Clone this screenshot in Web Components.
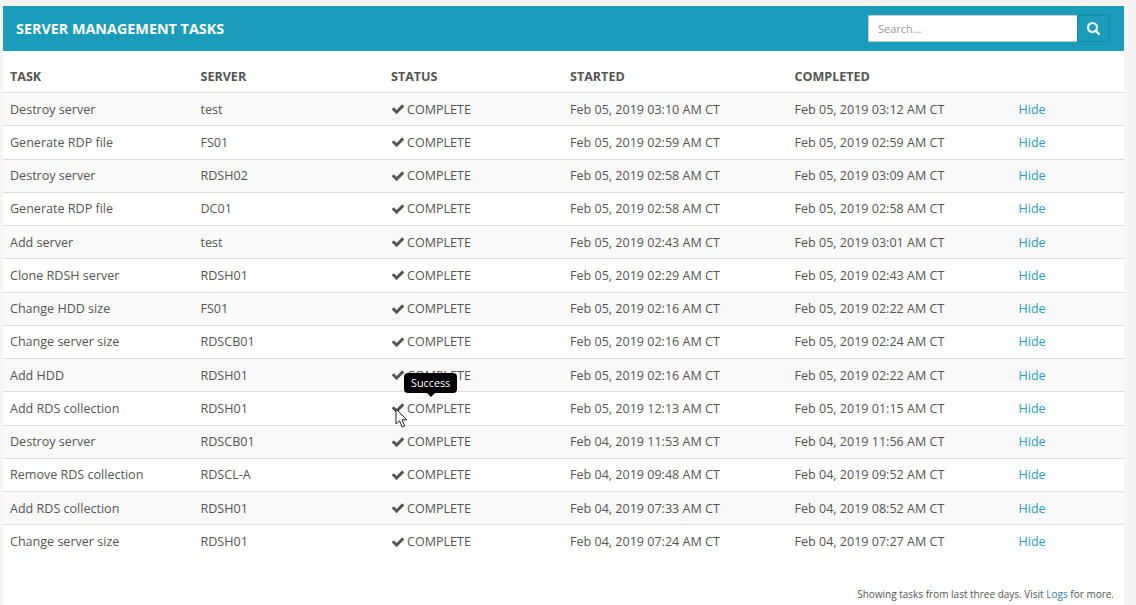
<!DOCTYPE html>
<html>
<head>
<meta charset="utf-8">
<title>Server Management Tasks</title>
<style>
  html, body { margin: 0; height: 605px; overflow: hidden; background: #f5f5f5; }
  body { font-family: "Open Sans", sans-serif; color: #555; }
</style>
</head>
<body>
<task-panel heading="SERVER MANAGEMENT TASKS">
  <task-row task="Destroy server" server="test" started="Feb 05, 2019 03:10 AM CT" completed="Feb 05, 2019 03:12 AM CT"></task-row>
  <task-row task="Generate RDP file" server="FS01" started="Feb 05, 2019 02:59 AM CT" completed="Feb 05, 2019 02:59 AM CT"></task-row>
  <task-row task="Destroy server" server="RDSH02" started="Feb 05, 2019 02:58 AM CT" completed="Feb 05, 2019 03:09 AM CT"></task-row>
  <task-row task="Generate RDP file" server="DC01" started="Feb 05, 2019 02:58 AM CT" completed="Feb 05, 2019 02:58 AM CT"></task-row>
  <task-row task="Add server" server="test" started="Feb 05, 2019 02:43 AM CT" completed="Feb 05, 2019 03:01 AM CT"></task-row>
  <task-row task="Clone RDSH server" server="RDSH01" started="Feb 05, 2019 02:29 AM CT" completed="Feb 05, 2019 02:43 AM CT"></task-row>
  <task-row task="Change HDD size" server="FS01" started="Feb 05, 2019 02:16 AM CT" completed="Feb 05, 2019 02:22 AM CT"></task-row>
  <task-row task="Change server size" server="RDSCB01" started="Feb 05, 2019 02:16 AM CT" completed="Feb 05, 2019 02:24 AM CT"></task-row>
  <task-row task="Add HDD" server="RDSH01" started="Feb 05, 2019 02:16 AM CT" completed="Feb 05, 2019 02:22 AM CT"></task-row>
  <task-row task="Add RDS collection" server="RDSH01" started="Feb 05, 2019 12:13 AM CT" completed="Feb 05, 2019 01:15 AM CT" hovered></task-row>
  <task-row task="Destroy server" server="RDSCB01" started="Feb 04, 2019 11:53 AM CT" completed="Feb 04, 2019 11:56 AM CT"></task-row>
  <task-row task="Remove RDS collection" server="RDSCL-A" started="Feb 04, 2019 09:48 AM CT" completed="Feb 04, 2019 09:52 AM CT"></task-row>
  <task-row task="Add RDS collection" server="RDSH01" started="Feb 04, 2019 07:33 AM CT" completed="Feb 04, 2019 08:52 AM CT"></task-row>
  <task-row task="Change server size" server="RDSH01" started="Feb 04, 2019 07:24 AM CT" completed="Feb 04, 2019 07:27 AM CT"></task-row>
  <span slot="footer">Showing tasks from last three days. Visit <a href="#" style="color:#2a7f9e;text-decoration:none">Logs</a> for more.</span>
</task-panel>

<script>
const COLUMNS = '190.5px 190.5px 179px 224.5px 224px 1fr';

class SearchBox extends HTMLElement {
  constructor() {
    super();
    this.attachShadow({ mode: 'open' });
    this.shadowRoot.innerHTML = `
      <style>
        :host { display: flex; width: 242px; height: 27px; }
        .field {
          flex: 1;
          box-sizing: border-box;
          background: #fff;
          border: 1px solid #ccc;
          border-right: none;
          border-radius: 2px 0 0 2px;
          padding: 0 9px;
          font-size: 11px;
          line-height: 25px;
          color: #999;
        }
        button {
          width: 33px;
          padding: 0;
          background: #1b9cba;
          border: 1px solid #188ba6;
          border-radius: 0 2px 2px 0;
          display: flex;
          align-items: center;
          justify-content: center;
        }
      </style>
      <div class="field">Search...</div>
      <button aria-label="Search">
        <svg width="13" height="13" viewBox="64 128 1664 1664" fill="#fff">
          <path d="M1216 832q0-185-131.500-316.500t-316.500-131.500-316.500 131.500-131.500 316.500 131.500 316.500 316.500 131.500 316.500-131.500 131.500-316.500zm512 832q0 52-38 90t-90 38q-54 0-90-38l-343-342q-179 124-399 124-143 0-273.500-55.500t-225-150-150-225-55.500-273.500 55.500-273.500 150-225 225-150 273.500-55.500 273.500 55.500 225 150 150 225 55.500 273.500q0 220-124 399l343 343q37 37 37 90z"/>
        </svg>
      </button>
    `;
  }
}

class TaskPanel extends HTMLElement {
  constructor() {
    super();
    this.attachShadow({ mode: 'open' });
    this.shadowRoot.innerHTML = `
      <style>
        :host {
          display: block;
          box-sizing: border-box;
          width: 1121px;
          height: 599px;
          margin: 6px 0 0 3px;
          background: #fff;
        }
        header {
          height: 45px;
          box-sizing: border-box;
          background: #1b9cba;
          padding: 0 14px 0 13px;
          display: flex;
          align-items: center;
          justify-content: space-between;
        }
        h1 { margin: 0; font-size: 14.35px; font-weight: 700; color: #fff; }
        .head {
          display: grid;
          grid-template-columns: ${COLUMNS};
          height: 42px;
          box-sizing: border-box;
          align-items: center;
          padding: 9px 0 0 7px;
          font-size: 12.55px;
          font-weight: 700;
          color: #555;
          border-bottom: 1px solid #ddd;
        }
        footer {
          margin-top: 28px;
          padding-right: 10px;
          text-align: right;
          font-size: 10px;
          line-height: 14px;
          color: #555;
        }
      </style>
      <header>
        <h1></h1>
        <search-box></search-box>
      </header>
      <div class="head">
        <span>TASK</span><span>SERVER</span><span>STATUS</span><span>STARTED</span><span>COMPLETED</span><span></span>
      </div>
      <slot></slot>
      <footer><slot name="footer"></slot></footer>
    `;
    this.shadowRoot.querySelector('h1').textContent = this.getAttribute('heading');
  }
}

class TaskRow extends HTMLElement {
  constructor() {
    super();
    this.attachShadow({ mode: 'open' });
    const tip = this.hasAttribute('hovered') ? `
      <span class="tip">Success</span>
      <svg class="cursor" width="13" height="20" viewBox="0 0 13 20">
        <path d="M1 1V16L4.5 12.8L7.2 19L9.6 18L7 11.8H11.8Z" fill="#fff" stroke="#222" stroke-width="1"/>
      </svg>` : '';
    this.shadowRoot.innerHTML = `
      <style>
        :host {
          display: grid;
          grid-template-columns: ${COLUMNS};
          height: 33.25px;
          box-sizing: border-box;
          align-items: center;
          padding-left: 7px;
          font-size: 12.55px;
          color: #555;
          border-bottom: 1px solid #ddd;
        }
        :host(:nth-child(odd)) { background: #f9f9f9; }
        :host(:last-of-type) { border-bottom: none; }
        .status { position: relative; display: flex; align-items: center; gap: 2px; }
        .status svg.check { flex: none; }
        a { color: #2a9dbb; text-decoration: none; }
        .tip {
          position: absolute;
          left: 13px;
          top: -27px;
          height: 20px;
          line-height: 20px;
          padding: 0 7px;
          background: #000;
          color: #fff;
          font-size: 10.8px;
          border-radius: 4px;
          white-space: nowrap;
        }
        .tip::after {
          content: '';
          position: absolute;
          left: 50%;
          bottom: -4px;
          margin-left: -4px;
          border: 4px solid transparent;
          border-bottom: 0;
          border-top-color: #000;
        }
        .cursor { position: absolute; left: 4px; top: 8px; }
      </style>
      <span class="task"></span>
      <span class="server"></span>
      <span class="status">
        <svg class="check" width="14" height="14" viewBox="0 0 1792 1792" fill="#555">
          <path d="M1671 566q0 40-28 68l-724 724-136 136q-28 28-68 28t-68-28l-136-136-362-362q-28-28-28-68t28-68l136-136q28-28 68-28t68 28l294 295 656-657q28-28 68-28t68 28l136 136q28 28 28 68z"/>
        </svg>
        <span>COMPLETE</span>
        ${tip}
      </span>
      <span class="started"></span>
      <span class="completed"></span>
      <a href="#">Hide</a>
    `;
    for (const name of ['task', 'server', 'started', 'completed']) {
      this.shadowRoot.querySelector('.' + name).textContent = this.getAttribute(name);
    }
  }
}

customElements.define('search-box', SearchBox);
customElements.define('task-panel', TaskPanel);
customElements.define('task-row', TaskRow);
</script>
</body>
</html>
